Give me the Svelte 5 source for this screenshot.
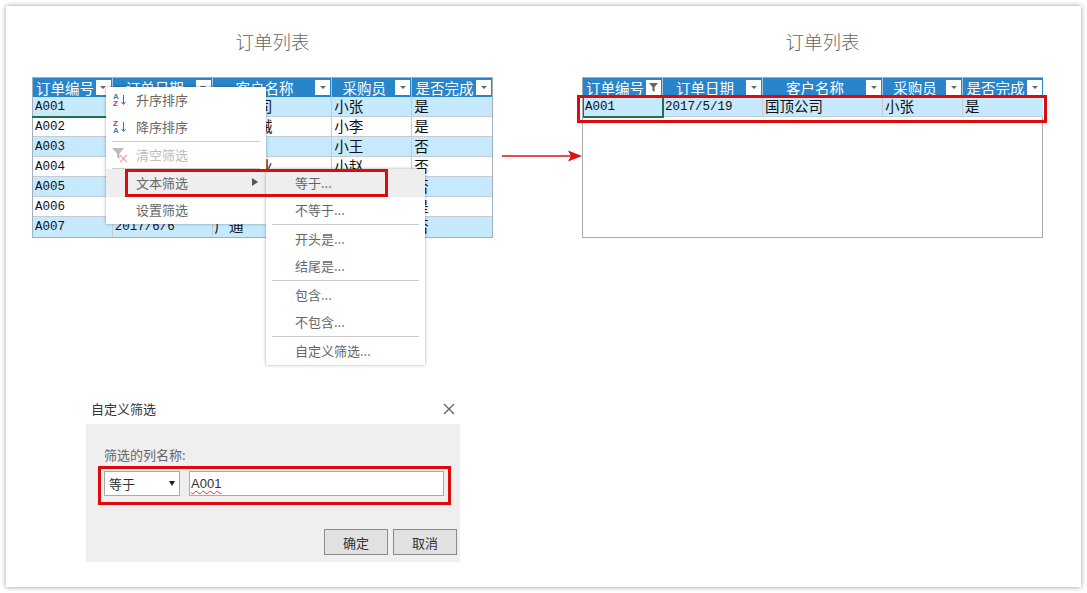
<script>
  const columns = [
    { name: '订单编号', w: 80 },
    { name: '订单日期', w: 100 },
    { name: '客户名称', w: 120 },
    { name: '采购员', w: 80 },
    { name: '是否完成', w: 80 }
  ];
  const orders = [
    ['A001', '2017/5/19', '国顶公司', '小张', '是'],
    ['A002', '2017/5/20', '通恒机械', '小李', '是'],
    ['A003', '2017/5/22', '森通', '小王', '否'],
    ['A004', '2017/5/25', '东南实业', '小赵', '否'],
    ['A005', '2017/5/28', '迈多贸易', '小张', '否'],
    ['A006', '2017/6/2', '祥通', '小李', '是'],
    ['A007', '2017/6/6', '广通', '小王', '否']
  ];
  const subGroups = [['等于...', '不等于...'], ['开头是...', '结尾是...'], ['包含...', '不包含...'], ['自定义筛选...']];
</script>

{#snippet sheetTable(rows, filtered)}
  <div class="grid">
    <div class="row head">
      {#each columns as c, i}
        <div class="th" style="width:{c.w}px">
          <span class="th-name">{c.name}</span>
          <span class="fbtn">
            {#if filtered && i === 0}
              <svg width="11" height="11" viewBox="0 0 11 11"><path d="M1 1h9L6.6 5v5L4.4 8.5V5z" fill="#666" /></svg>
            {:else}
              <i class="tri"></i>
            {/if}
          </span>
        </div>
      {/each}
    </div>
    {#each rows as r, ri}
      <div class="row" class:alt={ri % 2 === 0}>
        {#each r as v, ci}
          <div class="td" class:code={ci < 2} style="width:{columns[ci].w}px">{v}</div>
        {/each}
      </div>
    {/each}
  </div>
{/snippet}

<div class="page">
<div class="sheet">
  <div class="top">
    <section class="panel">
      <h2>订单列表</h2>
      {@render sheetTable(orders, false)}
      <div class="cursor-left"></div>
    </section>
    <section class="panel result">
      <h2>订单列表</h2>
      <div class="result-box">
        {@render sheetTable(orders.slice(0, 1), true)}
        <div class="cursor-right"></div>
      </div>
    </section>
  </div>

  <section class="dialog">
    <header>
      <span>自定义筛选</span>
      <svg width="12" height="12" viewBox="0 0 12 12"><path d="M1 1l10 10M11 1L1 11" stroke="#666" stroke-width="1.4" fill="none" /></svg>
    </header>
    <div class="dialog-body">
      <div class="dialog-label">筛选的列名称:</div>
      <div class="fields">
        <div class="select"><span>等于</span><i></i></div>
        <div class="input"><span>A001</span></div>
      </div>
      <div class="actions">
        <button>确定</button>
        <button>取消</button>
      </div>
    </div>
  </section>

  <!-- context menu floats over the table -->
  <div class="menu main-menu">
    <div class="item">
      <svg class="mi" width="16" height="16" viewBox="0 0 16 16">
        <text x="1" y="7" class="az blue">A</text><text x="1" y="14" class="az red">Z</text>
        <path d="M11.5 3v9M9.5 10l2 2.5 2-2.5" stroke="#666" fill="none" />
      </svg>
      升序排序
    </div>
    <div class="item">
      <svg class="mi" width="16" height="16" viewBox="0 0 16 16">
        <text x="1" y="7" class="az red">Z</text><text x="1" y="14" class="az blue">A</text>
        <path d="M11.5 3v9M9.5 10l2 2.5 2-2.5" stroke="#666" fill="none" />
      </svg>
      降序排序
    </div>
    <hr />
    <div class="item off">
      <svg class="mi" width="18" height="16" viewBox="0 0 18 16">
        <path d="M0 1h12L7.5 6.5V12L5 10V6.5z" fill="#bbb" />
        <path d="M8 8l7 7M15 8l-7 7" stroke="#eaa" stroke-width="1.4" fill="none" />
      </svg>
      清空筛选
    </div>
    <hr />
    <div class="item on">文本筛选<i class="more"></i></div>
    <div class="item">设置筛选</div>
  </div>

  <div class="menu sub-menu">
    {#each subGroups as group, gi}
      {#if gi > 0}<hr />{/if}
      {#each group as label}
        <div class="item" class:on={label === '等于...'}>{label}</div>
      {/each}
    {/each}
  </div>

  <div class="mark mark-menu"></div>
  <div class="mark mark-row"></div>
  <div class="mark mark-fields"></div>

  <svg class="arrow" width="82" height="14" viewBox="0 0 82 14">
    <path d="M0 7h70" stroke="#e01010" stroke-width="1.6" />
    <path d="M66 1.500l14 5.500-14 5.500 3-5.500z" fill="#e01010" />
  </svg>
</div>
</div>

<style>
  :global(body) { background:#fff; }
  .page { box-sizing:border-box; width:1087px; height:593px; padding:6px; overflow:hidden; }
  .sheet {
    position:relative; box-sizing:border-box; width:1075px; height:581px;
    padding-left:26px; background:#fff; box-shadow:0 0 5px rgba(0,0,0,.4);
    font-family:"Noto Sans CJK SC", "Liberation Sans", sans-serif; color:#555;
  }
  .top { display:flex; gap:89px; }
  .panel { position:relative; width:461px; }
  h2 { margin:0; height:71px; box-sizing:border-box; padding:20px 0 0 20px; text-align:center; font-size:18.500px; line-height:30px; font-weight:300; color:#666; }
  .grid { width:461px; box-sizing:border-box; border:1px solid #9fb0bc; }
  .row { display:flex; height:20px; }
  .head { height:19px; background:#2a84c9; }
  .th { display:flex; align-items:center; box-sizing:border-box; padding:0 1px; border-right:1px solid #a9c6dc; color:#fff; font-size:14.500px; line-height:19px; }
  .th:last-child { border-right:0; }
  .th-name { flex:1; min-width:0; text-align:center; white-space:nowrap; }
  .fbtn { display:flex; align-items:center; justify-content:center; flex:none; width:15px; height:15px; background:#fff; }
  .tri { width:0; height:0; border:3px solid transparent; border-top:3px solid #666; border-bottom:0; }
  .td { box-sizing:border-box; padding:0 2px; border-right:1px solid #c4ccd2; border-bottom:1px solid #c4ccd2; color:#111; font-size:14.500px; line-height:17px; white-space:nowrap; }
  .td:last-child { border-right:0; }
  .row:last-child .td { border-bottom:0; }
  .td.code { font-family:"Liberation Mono", monospace; font-size:12.500px; line-height:20px; }
  .alt { background:#c6e9fe; }
  .cursor-left { position:absolute; left:0; top:110px; width:80px; height:2px; background:#217346; }
  .result-box { position:relative; height:161px; box-sizing:border-box; border:1px solid #aaa; border-top:0; }
  .result-box .grid { width:460px; border-width:1px 0 0; }
  .result-box .row:last-child .td { border-bottom:1px solid #c4ccd2; }
  .cursor-right { position:absolute; left:0; top:20px; width:81px; height:21px; box-sizing:border-box; border:1px solid #217346; border-bottom-width:2px; border-right-width:2px; }

  .dialog { width:374px; margin:161px 0 0 54px; }
  .dialog header { display:flex; align-items:center; justify-content:space-between; height:25px; padding:0 5px 6px 5px; box-sizing:border-box; font-size:13px; color:#333; }
  .dialog-body { height:138px; box-sizing:border-box; padding:23px 3px 0 18px; background:#efefef; }
  .dialog-label { height:24px; font-size:13px; line-height:16px; color:#666; }
  .fields { display:flex; gap:9px; height:25px; }
  .select { display:flex; align-items:center; justify-content:space-between; box-sizing:border-box; width:76px; padding:0 4px; background:#fff; border:1px solid #aaa; font-size:13px; color:#333; }
  .select i { width:0; height:0; border:3.500px solid transparent; border-top:5px solid #222; border-bottom:0; }
  .input { box-sizing:border-box; width:255px; padding-left:1px; background:#fff; border:1px solid #aaa; font:13px/23px "Liberation Sans", sans-serif; color:#333; }
  .input span { text-decoration:underline wavy #d33 1px; text-underline-offset:2px; }
  .actions { display:flex; justify-content:flex-end; gap:5px; margin-top:33px; }
  button { width:64px; height:26px; padding:0; background:#e1e1e1; border:1px solid #8a8a8a; font:13px "Noto Sans CJK SC", sans-serif; color:#333; }

  .menu { position:absolute; box-sizing:border-box; background:#fff; box-shadow:0 0 3px rgba(0,0,0,.35); font-size:13px; color:#666; }
  .main-menu { left:100px; top:81px; width:160px; height:137px; }
  .sub-menu { left:260px; top:163px; width:159px; height:196px; }
  .item { position:relative; height:27px; line-height:26px; padding-left:30px; white-space:nowrap; }
  .sub-menu .item { padding-left:29px; }
  .item.on { height:28px; background:#eee; line-height:27px; }
  .main-menu .item.off { height:26px; }
  .item.off { color:#bbb; }
  .mi { position:absolute; left:6px; top:5px; }
  .az { font:bold 8px "Liberation Sans", sans-serif; }
  .blue { fill:#3f80c4; }
  .red { fill:#c8343a; }
  .more { position:absolute; right:8px; top:9px; width:0; height:0; border:4.500px solid transparent; border-left:6px solid #555; border-right:0; }
  hr { height:1px; margin:0 6px; border:0; background:#ccc; }
  .sub-menu hr { margin:0 6px 1px; }

  .mark { position:absolute; box-sizing:border-box; border:3px solid #dd0c0c; }
  .mark-menu { left:119px; top:163px; width:263px; height:28px; }
  .mark-row { left:571px; top:89px; width:470px; height:28px; }
  .mark-fields { left:92px; top:460px; width:353px; height:39px; }
  .arrow { position:absolute; left:496px; top:143px; }
</style>
